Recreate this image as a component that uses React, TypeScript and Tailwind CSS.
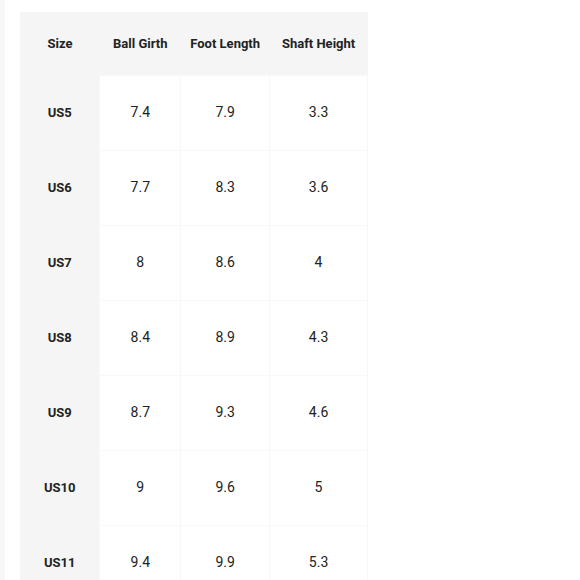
const rows = [
  ["US5", "7.4", "7.9", "3.3"],
  ["US6", "7.7", "8.3", "3.6"],
  ["US7", "8", "8.6", "4"],
  ["US8", "8.4", "8.9", "4.3"],
  ["US9", "8.7", "9.3", "4.6"],
  ["US10", "9", "9.6", "5"],
  ["US11", "9.4", "9.9", "5.3"],
]

export default function App() {
  return (
    <div className="w-[580px] h-[580px] overflow-hidden bg-white flex font-['Roboto',sans-serif] text-[#222]">
      <div className="w-[5px] bg-[#f7f7f7] shrink-0" />
      <div className="pl-[15px] pt-[12px]">
        <table className="border-collapse text-center w-[348px]">
          <thead>
            <tr className="bg-[#f5f5f5] h-[63px]">
              <th className="w-[80px] text-[13px] font-bold">Size</th>
              <th className="w-[81px] text-[13px] font-bold">Ball Girth</th>
              <th className="w-[89px] text-[13px] font-bold">Foot Length</th>
              <th className="w-[98px] text-[13px] font-bold">Shaft Height</th>
            </tr>
          </thead>
          <tbody>
            {rows.map((r) => (
              <tr key={r[0]} className="h-[75px]">
                <td className="bg-[#f5f5f5] text-[13px] font-bold">{r[0]}</td>
                <td className="text-[14px] border border-[#f8f8f8]">{r[1]}</td>
                <td className="text-[14px] border border-[#f8f8f8]">{r[2]}</td>
                <td className="text-[14px] border border-[#f8f8f8]">{r[3]}</td>
              </tr>
            ))}
          </tbody>
        </table>
      </div>
    </div>
  )
}
